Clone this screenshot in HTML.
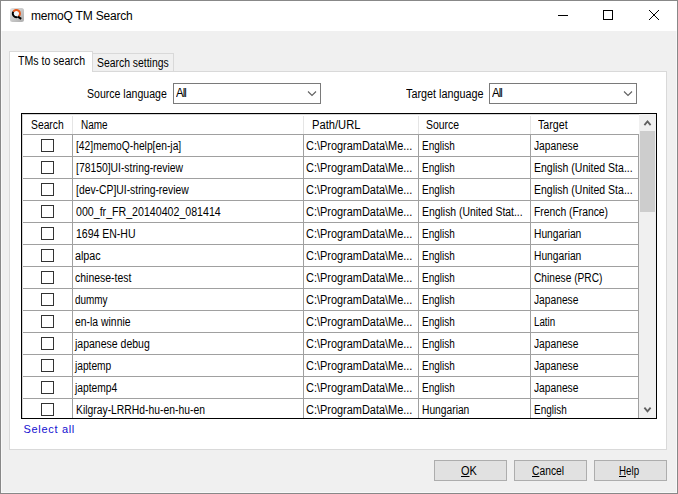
<!DOCTYPE html>
<html><head><meta charset="utf-8"><style>
html,body{margin:0;padding:0;}
body{width:678px;height:494px;position:relative;overflow:hidden;background:#f0f0f0;font-family:"Liberation Sans",sans-serif;}
.b{position:absolute;}
.t{position:absolute;white-space:nowrap;font-size:12px;line-height:12px;color:#000;transform-origin:0 0;}
u{text-decoration:underline;text-underline-offset:1px;}
</style></head><body>
<div class="b" style="left:0px;top:0px;width:678px;height:494px;background:#888"></div>
<div class="b" style="left:1px;top:1px;width:676px;height:30px;background:#fff"></div>
<div class="b" style="left:1px;top:31px;width:676px;height:462px;background:#f8f8f8"></div>
<div class="b" style="left:2px;top:31px;width:674px;height:461px;background:#f0f0f0"></div>
<svg class="b" style="left:9px;top:7px" width="16" height="16" viewBox="0 0 16 16">
<defs><linearGradient id="ig" x1="0" y1="0" x2="1" y2="1"><stop offset="0" stop-color="#e4e4e4"/><stop offset="1" stop-color="#acacac"/></linearGradient></defs>
<rect x="1" y="1" width="14" height="14" rx="2.5" fill="url(#ig)"/>
<circle cx="7.4" cy="6.6" r="2.7" fill="#f4f8fb"/>
<path d="M4.28 4.8 A3.6 3.6 0 1 1 9.71 9.36" stroke="#ea5a1c" stroke-width="1.9" fill="none"/>
<path d="M4.28 4.8 A3.6 3.6 0 0 0 8.63 9.98" stroke="#000" stroke-width="1.8" fill="none"/>
<path d="M8.9 9.6 L12.2 11.9" stroke="#000" stroke-width="1.9" fill="none"/>
</svg>
<div class="t" style="left:31px;top:10px;letter-spacing:-0.2px;transform:none">memoQ TM Search</div>
<div class="b" style="left:558px;top:15px;width:10px;height:1px;background:#000"></div>
<div class="b" style="left:603px;top:10px;width:10px;height:10px;border:1px solid #000;box-sizing:border-box"></div>
<svg class="b" style="left:649px;top:10px" width="10" height="10" shape-rendering="crispEdges"><rect x="0" y="0" width="1" height="1"/><rect x="9" y="0" width="1" height="1"/><rect x="1" y="1" width="1" height="1"/><rect x="8" y="1" width="1" height="1"/><rect x="2" y="2" width="1" height="1"/><rect x="7" y="2" width="1" height="1"/><rect x="3" y="3" width="1" height="1"/><rect x="6" y="3" width="1" height="1"/><rect x="4" y="4" width="1" height="1"/><rect x="5" y="4" width="1" height="1"/><rect x="5" y="5" width="1" height="1"/><rect x="4" y="5" width="1" height="1"/><rect x="6" y="6" width="1" height="1"/><rect x="3" y="6" width="1" height="1"/><rect x="7" y="7" width="1" height="1"/><rect x="2" y="7" width="1" height="1"/><rect x="8" y="8" width="1" height="1"/><rect x="1" y="8" width="1" height="1"/><rect x="9" y="9" width="1" height="1"/><rect x="0" y="9" width="1" height="1"/></svg>
<div class="b" style="left:92px;top:53px;width:82px;height:19px;border:1px solid #d9d9d9;border-bottom:none;box-sizing:border-box;background:#f0f0f0"></div>
<div class="b" style="left:9px;top:71px;width:658px;height:379px;border:1px solid #d9d9d9;box-sizing:border-box;background:#fff"></div>
<div class="b" style="left:9px;top:51px;width:84px;height:21px;border:1px solid #d9d9d9;border-bottom:none;box-sizing:border-box;background:#fff"></div>
<div class="b" style="left:10px;top:71px;width:82px;height:1px;background:#fff"></div>
<div class="t" style="left:17.60px;top:55px;transform:scaleX(0.8816);">TMs to search</div>
<div class="t" style="left:97.20px;top:57px;transform:scaleX(0.8663);">Search settings</div>
<div class="t" style="left:87.40px;top:88px;transform:scaleX(0.8791);">Source language</div>
<div class="b" style="left:173px;top:83px;width:148px;height:21px;border:1px solid #7a7a7a;box-sizing:border-box;background:#fff"></div>
<div class="t" style="left:175.50px;top:87px;transform:scaleX(0.7214);letter-spacing:-1px;transform:scaleX(0.95)">All</div>
<svg class="b" style="left:307px;top:90px" width="10" height="7"><path d="M1 1.5 L5 5.5 L9 1.5" stroke="#606060" stroke-width="1.1" fill="none"/></svg>
<div class="t" style="left:405.60px;top:88px;transform:scaleX(0.899);">Target language</div>
<div class="b" style="left:489px;top:83px;width:148px;height:21px;border:1px solid #7a7a7a;box-sizing:border-box;background:#fff"></div>
<div class="t" style="left:491.50px;top:87px;transform:scaleX(0.7214);letter-spacing:-1px;transform:scaleX(0.95)">All</div>
<svg class="b" style="left:623px;top:90px" width="10" height="7"><path d="M1 1.5 L5 5.5 L9 1.5" stroke="#606060" stroke-width="1.1" fill="none"/></svg>
<div class="b" style="left:21px;top:113px;width:636px;height:306px;background:#000"></div>
<div class="b" style="left:22px;top:114px;width:634px;height:304px;background:#fff"></div>
<div class="b" style="left:72px;top:116px;width:1px;height:18px;background:#e5e5e5"></div>
<div class="b" style="left:303px;top:116px;width:1px;height:18px;background:#e5e5e5"></div>
<div class="b" style="left:418px;top:116px;width:1px;height:18px;background:#e5e5e5"></div>
<div class="b" style="left:530px;top:116px;width:1px;height:18px;background:#e5e5e5"></div>
<div class="b" style="left:22px;top:114px;width:617px;height:1px;background:#d6d6d6"></div>
<div class="b" style="left:22px;top:114px;width:1px;height:304px;background:#d6d6d6"></div>
<div class="b" style="left:23px;top:134px;width:616px;height:1px;background:#a0a0a0"></div>
<div class="t" style="left:31.30px;top:119px;transform:scaleX(0.8605);">Search</div>
<div class="t" style="left:80.60px;top:119px;transform:scaleX(0.8313);">Name</div>
<div class="t" style="left:311.50px;top:119px;transform:scaleX(0.9308);">Path/URL</div>
<div class="t" style="left:425.90px;top:119px;transform:scaleX(0.8684);">Source</div>
<div class="t" style="left:538.00px;top:119px;transform:scaleX(0.8882);">Target</div>
<div class="b" style="left:23px;top:156px;width:615px;height:1px;background:#a0a0a0"></div>
<div class="b" style="left:41px;top:139px;width:13px;height:13px;border:1px solid #333;box-sizing:border-box;background:#fff"></div>
<div class="t" style="left:75.65px;top:140px;transform:scaleX(0.8573);">[42]memoQ-help[en-ja]</div>
<div class="t" style="left:306.10px;top:140px;transform:scaleX(0.9112);">C:\ProgramData\Me...</div>
<div class="t" style="left:422.30px;top:140px;transform:scaleX(0.8308);">English</div>
<div class="t" style="left:533.60px;top:140px;transform:scaleX(0.8538);">Japanese</div>
<div class="b" style="left:23px;top:178px;width:615px;height:1px;background:#a0a0a0"></div>
<div class="b" style="left:41px;top:161px;width:13px;height:13px;border:1px solid #333;box-sizing:border-box;background:#fff"></div>
<div class="t" style="left:75.65px;top:162px;transform:scaleX(0.8628);">[78150]UI-string-review</div>
<div class="t" style="left:306.10px;top:162px;transform:scaleX(0.9112);">C:\ProgramData\Me...</div>
<div class="t" style="left:422.30px;top:162px;transform:scaleX(0.8308);">English</div>
<div class="t" style="left:534.20px;top:162px;transform:scaleX(0.875);">English (United Sta...</div>
<div class="b" style="left:23px;top:200px;width:615px;height:1px;background:#a0a0a0"></div>
<div class="b" style="left:41px;top:183px;width:13px;height:13px;border:1px solid #333;box-sizing:border-box;background:#fff"></div>
<div class="t" style="left:75.65px;top:184px;transform:scaleX(0.863);">[dev-CP]UI-string-review</div>
<div class="t" style="left:306.10px;top:184px;transform:scaleX(0.9112);">C:\ProgramData\Me...</div>
<div class="t" style="left:422.30px;top:184px;transform:scaleX(0.8308);">English</div>
<div class="t" style="left:534.20px;top:184px;transform:scaleX(0.875);">English (United Sta...</div>
<div class="b" style="left:23px;top:222px;width:615px;height:1px;background:#a0a0a0"></div>
<div class="b" style="left:41px;top:205px;width:13px;height:13px;border:1px solid #333;box-sizing:border-box;background:#fff"></div>
<div class="t" style="left:76.10px;top:206px;transform:scaleX(0.8854);">000_fr_FR_20140402_081414</div>
<div class="t" style="left:306.10px;top:206px;transform:scaleX(0.9112);">C:\ProgramData\Me...</div>
<div class="t" style="left:422.30px;top:206px;transform:scaleX(0.8672);">English (United Stat...</div>
<div class="t" style="left:534.20px;top:206px;transform:scaleX(0.8605);">French (France)</div>
<div class="b" style="left:23px;top:244px;width:615px;height:1px;background:#a0a0a0"></div>
<div class="b" style="left:41px;top:227px;width:13px;height:13px;border:1px solid #333;box-sizing:border-box;background:#fff"></div>
<div class="t" style="left:76.10px;top:228px;transform:scaleX(0.875);">1694 EN-HU</div>
<div class="t" style="left:306.10px;top:228px;transform:scaleX(0.9112);">C:\ProgramData\Me...</div>
<div class="t" style="left:422.30px;top:228px;transform:scaleX(0.8308);">English</div>
<div class="t" style="left:534.30px;top:228px;transform:scaleX(0.8545);">Hungarian</div>
<div class="b" style="left:23px;top:266px;width:615px;height:1px;background:#a0a0a0"></div>
<div class="b" style="left:41px;top:249px;width:13px;height:13px;border:1px solid #333;box-sizing:border-box;background:#fff"></div>
<div class="t" style="left:74.90px;top:250px;transform:scaleX(0.8966);">alpac</div>
<div class="t" style="left:306.10px;top:250px;transform:scaleX(0.9112);">C:\ProgramData\Me...</div>
<div class="t" style="left:422.30px;top:250px;transform:scaleX(0.8308);">English</div>
<div class="t" style="left:534.30px;top:250px;transform:scaleX(0.8545);">Hungarian</div>
<div class="b" style="left:23px;top:288px;width:615px;height:1px;background:#a0a0a0"></div>
<div class="b" style="left:41px;top:271px;width:13px;height:13px;border:1px solid #333;box-sizing:border-box;background:#fff"></div>
<div class="t" style="left:74.90px;top:272px;transform:scaleX(0.8723);">chinese-test</div>
<div class="t" style="left:306.10px;top:272px;transform:scaleX(0.9112);">C:\ProgramData\Me...</div>
<div class="t" style="left:422.30px;top:272px;transform:scaleX(0.8308);">English</div>
<div class="t" style="left:533.60px;top:272px;transform:scaleX(0.8481);">Chinese (PRC)</div>
<div class="b" style="left:23px;top:310px;width:615px;height:1px;background:#a0a0a0"></div>
<div class="b" style="left:41px;top:293px;width:13px;height:13px;border:1px solid #333;box-sizing:border-box;background:#fff"></div>
<div class="t" style="left:74.90px;top:294px;transform:scaleX(0.8275);">dummy</div>
<div class="t" style="left:306.10px;top:294px;transform:scaleX(0.9112);">C:\ProgramData\Me...</div>
<div class="t" style="left:422.30px;top:294px;transform:scaleX(0.8308);">English</div>
<div class="t" style="left:533.60px;top:294px;transform:scaleX(0.8538);">Japanese</div>
<div class="b" style="left:23px;top:332px;width:615px;height:1px;background:#a0a0a0"></div>
<div class="b" style="left:41px;top:315px;width:13px;height:13px;border:1px solid #333;box-sizing:border-box;background:#fff"></div>
<div class="t" style="left:74.90px;top:316px;transform:scaleX(0.8672);">en-la winnie</div>
<div class="t" style="left:306.10px;top:316px;transform:scaleX(0.9112);">C:\ProgramData\Me...</div>
<div class="t" style="left:422.30px;top:316px;transform:scaleX(0.8308);">English</div>
<div class="t" style="left:534.20px;top:316px;transform:scaleX(0.8115);">Latin</div>
<div class="b" style="left:23px;top:354px;width:615px;height:1px;background:#a0a0a0"></div>
<div class="b" style="left:41px;top:337px;width:13px;height:13px;border:1px solid #333;box-sizing:border-box;background:#fff"></div>
<div class="t" style="left:75.08px;top:338px;transform:scaleX(0.8759);">japanese debug</div>
<div class="t" style="left:306.10px;top:338px;transform:scaleX(0.9112);">C:\ProgramData\Me...</div>
<div class="t" style="left:422.30px;top:338px;transform:scaleX(0.8308);">English</div>
<div class="t" style="left:533.60px;top:338px;transform:scaleX(0.8538);">Japanese</div>
<div class="b" style="left:23px;top:376px;width:615px;height:1px;background:#a0a0a0"></div>
<div class="b" style="left:41px;top:359px;width:13px;height:13px;border:1px solid #333;box-sizing:border-box;background:#fff"></div>
<div class="t" style="left:75.05px;top:360px;transform:scaleX(0.8477);">japtemp</div>
<div class="t" style="left:306.10px;top:360px;transform:scaleX(0.9112);">C:\ProgramData\Me...</div>
<div class="t" style="left:422.30px;top:360px;transform:scaleX(0.8308);">English</div>
<div class="t" style="left:533.60px;top:360px;transform:scaleX(0.8538);">Japanese</div>
<div class="b" style="left:23px;top:398px;width:615px;height:1px;background:#a0a0a0"></div>
<div class="b" style="left:41px;top:381px;width:13px;height:13px;border:1px solid #333;box-sizing:border-box;background:#fff"></div>
<div class="t" style="left:75.06px;top:382px;transform:scaleX(0.8569);">japtemp4</div>
<div class="t" style="left:306.10px;top:382px;transform:scaleX(0.9112);">C:\ProgramData\Me...</div>
<div class="t" style="left:422.30px;top:382px;transform:scaleX(0.8308);">English</div>
<div class="t" style="left:533.60px;top:382px;transform:scaleX(0.8538);">Japanese</div>
<div class="b" style="left:41px;top:403px;width:13px;height:13px;border:1px solid #333;box-sizing:border-box;background:#fff"></div>
<div class="t" style="left:76.10px;top:404px;transform:scaleX(0.8631);">Kilgray-LRRHd-hu-en-hu-en</div>
<div class="t" style="left:306.10px;top:404px;transform:scaleX(0.9112);">C:\ProgramData\Me...</div>
<div class="t" style="left:422.30px;top:404px;transform:scaleX(0.8545);">Hungarian</div>
<div class="t" style="left:534.30px;top:404px;transform:scaleX(0.8308);">English</div>
<div class="b" style="left:72px;top:135px;width:1px;height:283px;background:#a0a0a0"></div>
<div class="b" style="left:303px;top:135px;width:1px;height:283px;background:#a0a0a0"></div>
<div class="b" style="left:418px;top:135px;width:1px;height:283px;background:#a0a0a0"></div>
<div class="b" style="left:530px;top:135px;width:1px;height:283px;background:#a0a0a0"></div>
<div class="b" style="left:638px;top:135px;width:1px;height:283px;background:#a0a0a0"></div>
<div class="b" style="left:639px;top:114px;width:17px;height:304px;background:#f0f0f0"></div>
<div class="b" style="left:640px;top:131px;width:15px;height:81px;background:#cdcdcd"></div>
<svg class="b" style="left:643px;top:119px" width="10" height="8"><path d="M1.4 6.1 L4.5 2.4 L7.6 6.1" stroke="#606060" stroke-width="1.8" fill="none"/></svg>
<svg class="b" style="left:643px;top:406px" width="10" height="8"><path d="M1.4 1.7 L4.5 5.4 L7.6 1.7" stroke="#606060" stroke-width="1.8" fill="none"/></svg>
<div class="t" style="left:23.5px;top:424px;color:#1410d0;letter-spacing:0.68px;font-size:11px;line-height:11px;transform:none">Select all</div>
<div class="b" style="left:434px;top:460px;width:73px;height:21px;border:1px solid #adadad;box-sizing:border-box;background:#e1e1e1"></div>
<div class="t" style="left:461.00px;top:465px;transform:scaleX(0.9118);"><u>O</u>K</div>
<div class="b" style="left:514px;top:460px;width:73px;height:21px;border:1px solid #adadad;box-sizing:border-box;background:#e1e1e1"></div>
<div class="t" style="left:531.80px;top:465px;transform:scaleX(0.8579);"><u>C</u>ancel</div>
<div class="b" style="left:594px;top:460px;width:73px;height:21px;border:1px solid #adadad;box-sizing:border-box;background:#e1e1e1"></div>
<div class="t" style="left:618.90px;top:465px;transform:scaleX(0.812);"><u>H</u>elp</div>
</body></html>
